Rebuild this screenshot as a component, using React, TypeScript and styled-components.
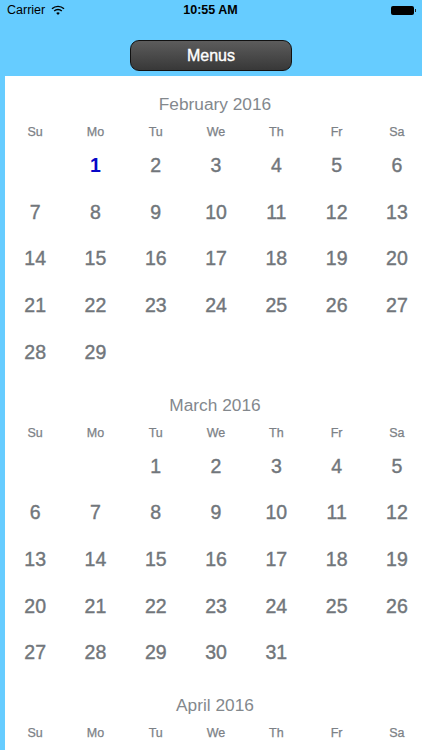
import React from 'react';
import styled, { createGlobalStyle } from 'styled-components';

const GlobalStyle = createGlobalStyle`
  html, body {
    margin: 0;
    padding: 0;
    background: #66ccff;
  }
  body {
    font-family: "Liberation Sans", Arial, sans-serif;
  }
`;

const Screen = styled.div`
  width: 422px;
  height: 750px;
  display: flex;
  flex-flow: column;
  overflow: hidden;
  background-color: #66ccff;
`;

const StatusBar = styled.div`
  height: 20px;
  padding: 0 6px 0 7px;
  display: grid;
  grid-template-columns: 1fr auto 1fr;
  align-items: center;
  font-size: 12.5px;
  color: #000;
`;

const Carrier = styled.div`
  display: flex;
  align-items: center;
  gap: 6px;
`;

const Clock = styled.div`
  font-weight: 700;
  font-size: 12.5px;
  transform: translateX(-1px);
`;

const Battery = styled.div`
  justify-self: end;
  display: flex;
  align-items: center;
`;

const BatteryBody = styled.div`
  width: 23px;
  height: 9px;
  border-radius: 2px;
  background-color: #000;
`;

const BatteryTip = styled.div`
  width: 1.5px;
  height: 3px;
  background-color: #222;
  margin-left: 1px;
`;

const TopBar = styled.div`
  height: 56px;
  flex-shrink: 0;
  display: flex;
  justify-content: center;
  padding-top: 20px;
  box-sizing: border-box;
`;

const MenuButton = styled.button`
  width: 162px;
  height: 31px;
  padding: 0;
  box-sizing: border-box;
  border: 1px solid #111;
  border-radius: 9px;
  background: linear-gradient(#5c5c5c, #383838);
  color: #fff;
  font-family: "Liberation Sans", Arial, sans-serif;
  font-weight: 400;
  font-size: 16px;
  -webkit-text-stroke: 0.4px #fff;
`;

const Panel = styled.div`
  flex: 1;
  margin-left: 5px;
  background-color: #fff;
  overflow: hidden;
`;

const Month = styled.section`
  height: 300.5px;
`;

const MonthTitle = styled.div`
  width: 422px;
  padding-top: 18.1px;
  height: 20px;
  line-height: 20px;
  text-align: center;
  font-size: 17.3px;
  color: #83888d;
  margin-left: -1px;
`;

const Grid = styled.div`
  display: grid;
  grid-template-columns: repeat(7, 60.3px);
`;

const WeekDay = styled.div`
  height: 20px;
  line-height: 20px;
  margin-top: 8.1px;
  text-align: center;
  font-size: 12.5px;
  color: #7c8186;
  -webkit-text-stroke: 0.25px #7c8186;
`;

const Days = styled(Grid)`
  grid-auto-rows: 46.6px;
  padding-top: 0.1px;
`;

const Day = styled.div<{ $today?: boolean }>`
  line-height: 46.6px;
  text-align: center;
  font-size: 19.5px;
  font-weight: ${p => (p.$today ? 700 : 400)};
  color: ${p => (p.$today ? '#0808c8' : '#71767b')};
  -webkit-text-stroke: ${p => (p.$today ? '0' : '0.4px #71767b')};
`;

const weekDays = ['Su', 'Mo', 'Tu', 'We', 'Th', 'Fr', 'Sa'];

const months = [
  { title: 'February 2016', offset: 1, length: 29, today: 1 },
  { title: 'March 2016', offset: 2, length: 31 },
  { title: 'April 2016', offset: 5, length: 0 },
];

const WifiIcon = () => (
  <svg width="14" height="11" viewBox="0 0 14 11">
    <path d="M1 3.8a8.6 8.6 0 0 1 12 0" fill="none" stroke="#000" strokeWidth="1.4" />
    <path d="M3.2 6a5.4 5.4 0 0 1 7.6 0" fill="none" stroke="#000" strokeWidth="1.4" />
    <path d="M5.2 8a2.6 2.6 0 0 1 3.6 0L7 10z" fill="#000" />
  </svg>
);

export default function App() {
  return (
    <Screen>
      <GlobalStyle />
      <StatusBar>
        <Carrier>
          Carrier
          <WifiIcon />
        </Carrier>
        <Clock>10:55 AM</Clock>
        <Battery>
          <BatteryBody />
          <BatteryTip />
        </Battery>
      </StatusBar>
      <TopBar>
        <MenuButton>Menus</MenuButton>
      </TopBar>
      <Panel>
        {months.map(month => (
          <Month key={month.title}>
            <MonthTitle>{month.title}</MonthTitle>
            <Grid>
              {weekDays.map(day => (
                <WeekDay key={day}>{day}</WeekDay>
              ))}
            </Grid>
            <Days>
              {Array.from({ length: month.offset }, (_, i) => (
                <div key={`empty-${i}`} />
              ))}
              {Array.from({ length: month.length }, (_, i) => (
                <Day key={i} $today={month.today === i + 1}>
                  {i + 1}
                </Day>
              ))}
            </Days>
          </Month>
        ))}
      </Panel>
    </Screen>
  );
}
